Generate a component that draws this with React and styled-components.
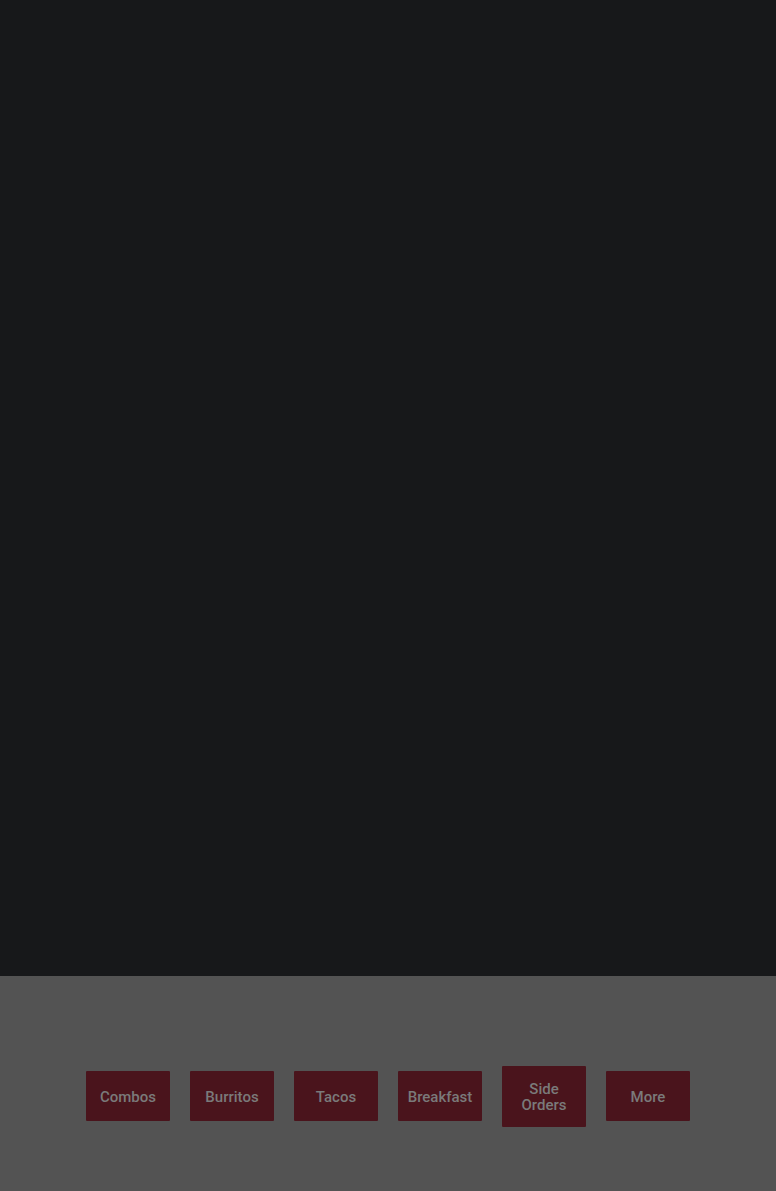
import React from "react";
import styled, { createGlobalStyle } from "styled-components";

const Global = createGlobalStyle`
  html, body { margin: 0; padding: 0; background: #17181a; }
  body { font-family: Roboto, "Liberation Sans", Arial, sans-serif; }
`;

const Page = styled.div`
  width: 776px;
  height: 1191px;
  display: flex;
  flex-direction: column;
  background: #17181a;
`;

const Stage = styled.div`
  height: 976px;
  background: #17181a;
`;

const Footer = styled.nav`
  flex: 1;
  background: #535353;
  display: flex;
  justify-content: center;
  align-items: flex-start;
  padding-top: 90px;
  box-sizing: border-box;
`;

const Row = styled.div`
  display: flex;
  align-items: center;
  gap: 20px;
  height: 60px;
`;

const CatButton = styled.button`
  width: 84px;
  min-height: 50px;
  padding: 15px 4px 14px;
  box-sizing: border-box;
  border: none;
  border-radius: 1px;
  background: #4a141c;
  color: #7a7a7a;
  font-family: Roboto, "Liberation Sans", Arial, sans-serif;
  font-size: 15px;
  font-weight: 500;
  line-height: 16px;
  text-align: center;
  display: flex;
  align-items: center;
  justify-content: center;
`;

const cats = ["Combos", "Burritos", "Tacos", "Breakfast", "Side Orders", "More"];

export default function App() {
  return (
    <>
      <Global />
      <Page>
        <Stage />
        <Footer>
          <Row>
            {cats.map((c) => (
              <CatButton key={c}>{c}</CatButton>
            ))}
          </Row>
        </Footer>
      </Page>
    </>
  );
}
